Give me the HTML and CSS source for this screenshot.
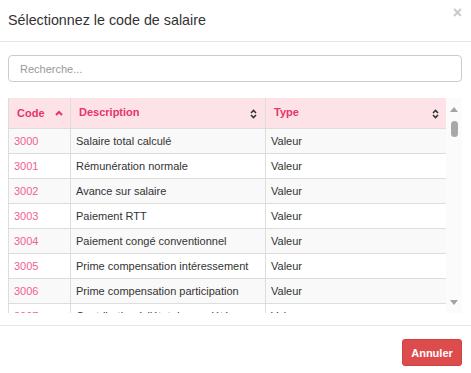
FILE: index.html
```html
<!DOCTYPE html>
<html lang="fr">
<head>
  <meta charset="UTF-8">
  <title>Sélectionnez le code de salaire</title>
  <link rel="stylesheet" href="styles.css">
</head>
<body>
  <div class="modal">
    <div class="modal-header">
      <h4 class="modal-title">Sélectionnez le code de salaire</h4>
      <span class="close">&times;</span>
    </div>
    <div class="modal-body">
      <input type="text" class="search" placeholder="Recherche...">
      <div class="grid">
        <div class="grid-scroll">
          <table>
            <thead>
              <tr>
                <th class="col-code">Code
                  <svg class="sort" width="8" height="6" viewBox="0 0 8 6"><path d="M1 5 L4 2 L7 5" fill="none" stroke="#e8336b" stroke-width="2"/></svg>
                </th>
                <th class="col-desc">Description
                  <svg class="sort" width="7" height="10" viewBox="0 0 7 10"><path d="M1 4 L3.5 1.5 L6 4 M1 6 L3.5 8.5 L6 6" fill="none" stroke="#333" stroke-width="1.6"/></svg>
                </th>
                <th class="col-type">Type
                  <svg class="sort" width="7" height="10" viewBox="0 0 7 10"><path d="M1 4 L3.5 1.5 L6 4 M1 6 L3.5 8.5 L6 6" fill="none" stroke="#333" stroke-width="1.6"/></svg>
                </th>
              </tr>
            </thead>
            <tbody>
              <tr><td class="code">3000</td><td>Salaire total calculé</td><td>Valeur</td></tr>
              <tr><td class="code">3001</td><td>Rémunération normale</td><td>Valeur</td></tr>
              <tr><td class="code">3002</td><td>Avance sur salaire</td><td>Valeur</td></tr>
              <tr><td class="code">3003</td><td>Paiement RTT</td><td>Valeur</td></tr>
              <tr><td class="code">3004</td><td>Paiement congé conventionnel</td><td>Valeur</td></tr>
              <tr><td class="code">3005</td><td>Prime compensation intéressement</td><td>Valeur</td></tr>
              <tr><td class="code">3006</td><td>Prime compensation participation</td><td>Valeur</td></tr>
              <tr><td class="code">3007</td><td>Contribution à l'état des sociétés</td><td>Valeur</td></tr>
            </tbody>
          </table>
        </div>
        <div class="scrollbar">
          <span class="arrow-up"></span>
          <span class="thumb"></span>
          <span class="track"></span>
          <span class="arrow-down"></span>
        </div>
      </div>
    </div>
    <div class="modal-footer">
      <button class="btn-cancel">Annuler</button>
    </div>
  </div>
</body>
</html>
```

FILE: styles.css
```css
body {
  margin: 0;
  padding: 0;
  background: #fff;
  font-family: "Liberation Sans", Arial, sans-serif;
  font-size: 11px;
  color: #333;
}
.modal {
  width: 471px;
  height: 373px;
  display: flex;
  flex-direction: column;
}
.modal-header {
  display: flex;
  justify-content: space-between;
  height: 42px;
  padding: 0 9px 0 8px;
  border-bottom: 1px solid #e5e5e5;
  box-sizing: border-box;
}
.modal-title {
  margin: 0;
  font-size: 14.3px;
  font-weight: normal;
  line-height: 40px;
  color: #333;
}
.close {
  margin-top: 5px;
  font-size: 16px;
  font-weight: bold;
  line-height: 16px;
  color: #c8c8c8;
}
.modal-body {
  padding: 13px 9px 0 8px;
  height: 284px;
  box-sizing: border-box;
  border-bottom: 1px solid #e5e5e5;
}
.search {
  display: block;
  width: 100%;
  height: 27px;
  box-sizing: border-box;
  padding: 0 11px;
  border: 1px solid #ccc;
  border-radius: 4px;
  font-family: "Liberation Sans", Arial, sans-serif;
  font-size: 11px;
  color: #333;
  outline: none;
}
.search::placeholder {
  color: #999;
}
.grid {
  display: flex;
  margin-top: 16px;
  height: 215px;
}
.grid-scroll {
  width: 438px;
  overflow: hidden;
}
table {
  border-collapse: collapse;
  width: 438px;
  table-layout: fixed;
}
th, td {
  border-left: 1px solid #ddd;
  text-align: left;
  white-space: nowrap;
  overflow: hidden;
}
th {
  height: 30px;
  padding: 0 8px;
  background: #fde3e8;
  color: #e8336b;
  font-weight: bold;
  border-bottom: 1px solid #ddd;
  box-sizing: border-box;
}
.col-code { width: 62px; }
.col-desc { width: 195px; }
.col-type { width: 181px; }
.sort {
  float: right;
  margin-top: 3px;
}
.col-code .sort {
  float: none;
  margin: 0 0 1px 7px;
}
td {
  height: 25px;
  padding: 0 5px 0 5px;
  border-bottom: 1px solid #ddd;
  box-sizing: border-box;
}
tbody tr:nth-child(odd) td {
  background: #f9f9f9;
}
td.code {
  color: #f0628e;
}
.scrollbar {
  width: 16px;
  display: flex;
  flex-direction: column;
  align-items: center;
  background: #fbfbfb;
}
.arrow-up {
  margin-top: 9px;
  width: 0;
  height: 0;
  border-left: 4px solid transparent;
  border-right: 4px solid transparent;
  border-bottom: 5px solid #a3a3a3;
}
.thumb {
  margin-top: 9px;
  width: 7px;
  height: 16px;
  border-radius: 4px;
  background: #a8a8a8;
}
.track {
  flex: 1;
}
.arrow-down {
  margin-bottom: 8px;
  width: 0;
  height: 0;
  border-left: 4px solid transparent;
  border-right: 4px solid transparent;
  border-top: 5px solid #a3a3a3;
}
.modal-footer {
  display: flex;
  justify-content: flex-end;
  padding: 13px 9px 0 8px;
}
.btn-cancel {
  width: 60px;
  height: 27px;
  border: 1px solid #d43f3a;
  border-radius: 3px;
  background: #dc4c4c;
  color: #fff;
  font-family: "Liberation Sans", Arial, sans-serif;
  font-size: 11px;
  font-weight: bold;
}
```
